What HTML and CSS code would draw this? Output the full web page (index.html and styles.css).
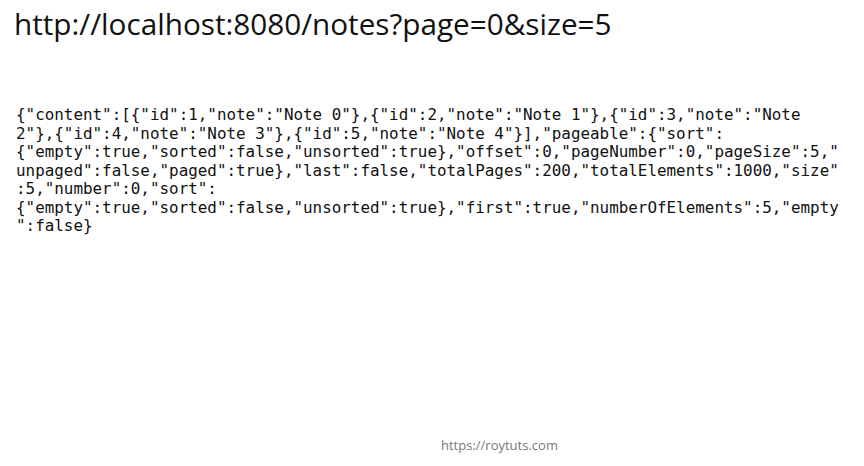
FILE: index.html
```html
<!DOCTYPE html>
<html>
<head>
<meta charset="utf-8">
<link rel="stylesheet" href="styles.css">
</head>
<body>
<div class="page">
  <h1 class="url">http://localhost:8080/notes?page=0&amp;size=5</h1>
  <pre class="json">{"content":[{"id":1,"note":"Note 0"},{"id":2,"note":"Note 1"},{"id":3,"note":"Note
2"},{"id":4,"note":"Note 3"},{"id":5,"note":"Note 4"}],"pageable":{"sort":
{"empty":true,"sorted":false,"unsorted":true},"offset":0,"pageNumber":0,"pageSize":5,"
unpaged":false,"paged":true},"last":false,"totalPages":200,"totalElements":1000,"size"
:5,"number":0,"sort":
{"empty":true,"sorted":false,"unsorted":true},"first":true,"numberOfElements":5,"empty
":false}</pre>
  <div class="footer">https://roytuts.com</div>
</div>
</body>
</html>
```
FILE: styles.css
```css
html, body {
  margin: 0;
  padding: 0;
  background: #ffffff;
}
.page {
  width: 864px;
  height: 466px;
  display: flex;
  flex-direction: column;
  box-sizing: border-box;
}
.url {
  margin: 0;
  padding: 3.5px 0 0 14px;
  font-family: "Open Sans", sans-serif;
  font-weight: 400;
  font-size: 29.7px;
  line-height: 40px;
  color: #111;
}
.json {
  margin: 62.8px 0 0 16px;
  font-family: "DejaVu Sans Mono", monospace;
  font-size: 15.9px;
  line-height: 18.45px;
  color: #111;
}
.footer {
  margin-top: auto;
  margin-bottom: 12px;
  padding-left: 441px;
  font-family: "Open Sans", sans-serif;
  font-size: 13px;
  color: #777;
}
```
